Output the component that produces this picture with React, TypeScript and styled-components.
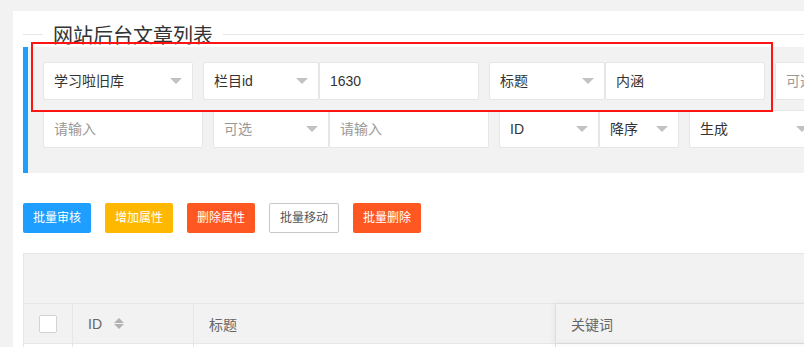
import React from 'react';
import styled, { createGlobalStyle } from 'styled-components';

// Global styles
var GlobalStyle = createGlobalStyle`
    html, body {
        margin: 0;
        padding: 0;
        background: #f2f2f2;
        overflow: hidden;
        font-family: "Liberation Sans", "Noto Sans CJK SC", sans-serif;
        color: #333;
    }
`;

// Styled components
var Page = styled.div`
    position: relative;
    width: 1400px;
    padding: 11px 0 0 13px;
`;

var Card = styled.div`
    background: #fff;
    padding: 10px 10px 0 10px;
    min-height: 400px;
`;

var FieldSet = styled.fieldset`
    margin: 0;
    padding: 0;
    border: none;
    border-top: 1px solid #e6e6e6;
    min-width: 0;
`;

var Legend = styled.legend`
    margin-left: 20px;
    padding: 0 10px;
    font-size: 20px;
    line-height: 26px;
    height: 26px;
    font-weight: 400;
    color: #333;

    span {
        position: relative;
        top: 2px;
    }
`;

var Quote = styled.div`
    background: #f2f2f2;
    border-left: 5px solid #1e9fff;
    padding: 15px;
`;

var FormRow = styled.div`
    display: flex;
    gap: 10px;
    margin-bottom: 10px;
    white-space: nowrap;
`;

var FormItem = styled.div`
    display: flex;
    flex-shrink: 0;
`;

var Field = styled.div<{ $width: number; $placeholder?: boolean }>`
    position: relative;
    box-sizing: border-box;
    width: ${p => p.$width}px;
    height: 38px;
    flex-shrink: 0;
    padding: 0 30px 0 10px;
    background: #fff;
    border: 1px solid #e6e6e6;
    border-radius: 2px;
    font-size: 14px;
    line-height: 36px;
    color: ${p => (p.$placeholder ? '#999' : '#333')};
    overflow: hidden;
`;

var Arrow = styled.i`
    position: absolute;
    right: 10px;
    top: 50%;
    margin-top: -3px;
    width: 0;
    height: 0;
    border-style: solid;
    border-width: 6px 6px 0 6px;
    border-color: #c2c2c2 transparent transparent transparent;
`;

var ButtonBar = styled.div`
    display: flex;
    gap: 14px;
    margin-top: 30px;
`;

var buttonColors = {
    normal: '#1e9fff',
    warm: '#ffb800',
    danger: '#ff5722',
};

var Button = styled.button<{ $kind: 'normal' | 'warm' | 'danger' | 'primary' }>`
    height: 30px;
    padding: 0 10px;
    font-family: inherit;
    font-size: 12px;
    line-height: 30px;
    border-radius: 2px;
    cursor: pointer;
    border: none;
    background: ${p => (p.$kind === 'primary' ? '#fff' : buttonColors[p.$kind])};
    color: #fff;

    ${p => p.$kind === 'primary' && `
        border: 1px solid #c9c9c9;
        line-height: 28px;
        color: #555;
    `}
`;

var Table = styled.div`
    margin-top: 20px;
    border: 1px solid #e6e6e6;
    border-bottom: none;
`;

var Toolbar = styled.div`
    height: 49px;
    background: #f2f2f2;
    border-bottom: 1px solid #e6e6e6;
`;

var Row = styled.div<{ $head?: boolean }>`
    display: grid;
    grid-template-columns: 49px 121px 362px 1fr;
    height: 39px;
    background: ${p => (p.$head ? '#f2f2f2' : '#fff')};
    border-bottom: 1px solid #e6e6e6;
`;

var Cell = styled.div<{ $center?: boolean; $shadow?: boolean }>`
    position: relative;
    display: flex;
    align-items: center;
    justify-content: ${p => (p.$center ? 'center' : 'flex-start')};
    padding: 0 ${p => (p.$center ? 0 : 15)}px;
    border-right: 1px solid #e6e6e6;
    font-size: 14px;
    color: #666;
    box-shadow: ${p => (p.$shadow ? '-1px 0 6px rgba(0,0,0,0.07)' : 'none')};
`;

var CheckBox = styled.span`
    box-sizing: border-box;
    display: inline-block;
    width: 18px;
    height: 18px;
    margin-left: -1px;
    background: #fff;
    border: 1px solid #d2d2d2;
    border-radius: 2px;
`;

var SortIcon = styled.span`
    display: inline-flex;
    flex-direction: column;
    gap: 1px;
    margin-left: 12px;

    &::before, &::after {
        content: "";
        width: 0;
        height: 0;
        border-style: solid;
    }
    &::before {
        border-width: 0 5px 5px 5px;
        border-color: transparent transparent #b2b2b2 transparent;
    }
    &::after {
        border-width: 5px 5px 0 5px;
        border-color: #b2b2b2 transparent transparent transparent;
    }
`;

// Annotation marker drawn over the first form row
var Highlight = styled.div`
    position: absolute;
    left: 31px;
    top: 42px;
    width: 742px;
    height: 70px;
    box-sizing: border-box;
    border: 2px solid #ff1414;
    pointer-events: none;
    z-index: 5;
`;

function Select(props: { width: number; value: string; placeholder?: boolean })
{
    return (
        <Field $width={props.width} $placeholder={props.placeholder}>
            {props.value}
            <Arrow />
        </Field>
    );
}

function Input(props: { width: number; value: string; placeholder?: boolean })
{
    return (
        <Field $width={props.width} $placeholder={props.placeholder}>
            {props.value}
        </Field>
    );
}

// Main component
export default function App()
{
    return (
        <>
            <GlobalStyle />
            <Page>
                <Card>
                    <FieldSet>
                        <Legend><span>网站后台文章列表</span></Legend>
                        <Quote>
                            <FormRow>
                                <FormItem>
                                    <Select width={150} value="学习啦旧库" />
                                </FormItem>
                                <FormItem>
                                    <Select width={116} value="栏目id" />
                                    <Input width={160} value="1630" />
                                </FormItem>
                                <FormItem>
                                    <Select width={116} value="标题" />
                                    <Input width={160} value="内涵" />
                                </FormItem>
                                <FormItem>
                                    <Select width={116} value="可选" placeholder />
                                    <Input width={160} value="请输入" placeholder />
                                </FormItem>
                            </FormRow>
                            <FormRow>
                                <FormItem>
                                    <Input width={160} value="请输入" placeholder />
                                </FormItem>
                                <FormItem>
                                    <Select width={116} value="可选" placeholder />
                                    <Input width={160} value="请输入" placeholder />
                                </FormItem>
                                <FormItem>
                                    <Select width={100} value="ID" />
                                    <Select width={80} value="降序" />
                                </FormItem>
                                <FormItem>
                                    <Select width={130} value="生成" />
                                </FormItem>
                            </FormRow>
                        </Quote>
                    </FieldSet>

                    <ButtonBar>
                        <Button $kind="normal">批量审核</Button>
                        <Button $kind="warm">增加属性</Button>
                        <Button $kind="danger">删除属性</Button>
                        <Button $kind="primary">批量移动</Button>
                        <Button $kind="danger">批量删除</Button>
                    </ButtonBar>

                    <Table>
                        <Toolbar />
                        <Row $head>
                            <Cell $center><CheckBox /></Cell>
                            <Cell>ID<SortIcon /></Cell>
                            <Cell>标题</Cell>
                            <Cell $shadow>关键词</Cell>
                        </Row>
                        <Row>
                            <Cell $center />
                            <Cell />
                            <Cell />
                            <Cell $shadow />
                        </Row>
                    </Table>
                </Card>
                <Highlight />
            </Page>
        </>
    );
}
